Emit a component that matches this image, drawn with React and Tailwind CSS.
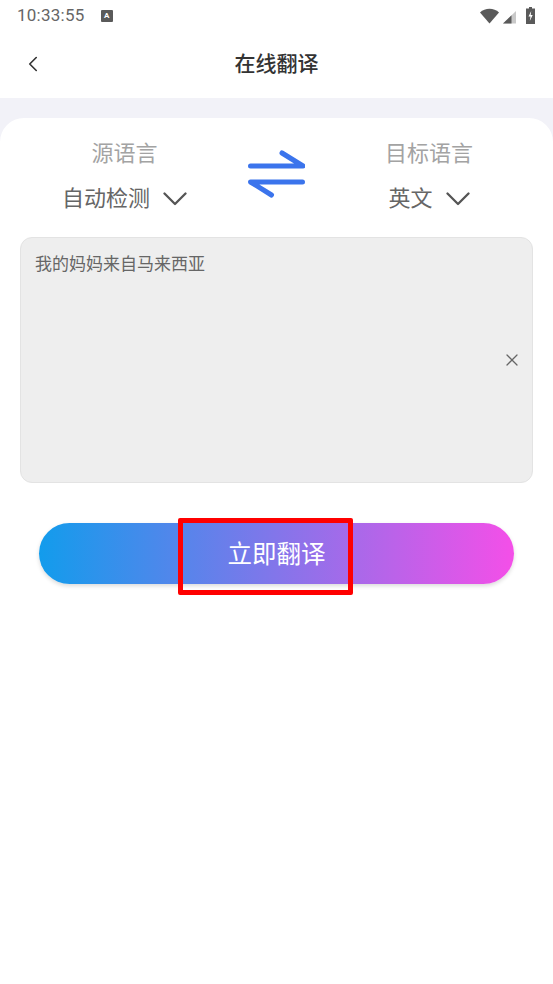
import React from "react";
import { ChevronLeft, X } from "lucide-react";

const cjk = "font-['Roboto','Noto_Sans_CJK_SC',sans-serif]";

function StatusBar() {
  return (
    <div className="h-[31px] flex items-center justify-between pl-[17px] pr-[18px] text-[#666666]">
      <div className="flex items-center gap-[16px]">
        <span className="text-[17px] leading-none tracking-[0.25px]">10:33:55</span>
        <span className="w-[12px] h-[12px] bg-[#5a5a5a] rounded-[1px] flex items-center justify-center text-white text-[8px] font-bold leading-none">A</span>
      </div>
      <div className="flex items-center gap-[10px]">
        <svg width="36" height="16" viewBox="0 0 36 16">
          <path d="M0 4.500C5-.5 14-.5 19 4.500L9.500 15.500z" fill="#5a5a5a" />
          <path d="M23 15.500L36 3v12.500z" fill="#c9c9c9" />
          <path d="M23 15.500l8.500-8.200v8.200z" fill="#5a5a5a" />
        </svg>
        <svg width="9" height="17" viewBox="0 0 9 17">
          <path d="M3 0h3v1.500h3V17H0V1.500h3z" fill="#5a5a5a" />
          <path d="M5.200 4L2.500 9.500h2l-.7 4.500L6.700 8h-2z" fill="#fff" />
        </svg>
      </div>
    </div>
  );
}

function Caret() {
  return (
    <svg width="24" height="14" viewBox="0 0 24 14">
      <path d="M1.500 1.500L12 12 22.500 1.500" fill="none" stroke="#555555" strokeWidth="2.300" strokeLinecap="round" strokeLinejoin="round" />
    </svg>
  );
}

function LangPicker({ label, value, className }) {
  return (
    <div className={`flex flex-col items-center ${className}`}>
      <div className="text-[22px] leading-[30px] text-[#a3a3a3]">{label}</div>
      <div className="mt-[15px] flex items-center gap-[13px] text-[22px] leading-[30px] text-[#666666]">
        {value}
        <Caret />
      </div>
    </div>
  );
}

export default function App() {
  return (
    <div className={`relative w-[553px] h-[984px] bg-white overflow-hidden ${cjk}`}>
      <StatusBar />

      <div className="relative h-[67px] flex items-center justify-center">
        <ChevronLeft size={26} strokeWidth={1.5} color="#333333" className="absolute left-[20px] top-[20px]" />
        <h1 className="text-[21px] font-medium text-[#333333] leading-none">在线翻译</h1>
      </div>

      <div className="bg-[#f2f2f8] pt-[20px]">
        <div className="bg-white rounded-t-[24px] h-[866px] px-[20px]">
          <div className="flex items-start justify-between pt-[21px] h-[119px]">
            <LangPicker label="源语言" value="自动检测" className="ml-[42px]" />
            <svg width="58" height="50" viewBox="0 0 58 50" className="mr-[20px] mt-[10px]">
              <path d="M3.500 17H56L35 4M55.500 33H3.500l21 13" fill="none" stroke="#3b74ec" strokeWidth="5" strokeLinecap="round" strokeLinejoin="round" />
            </svg>
            <LangPicker label="目标语言" value="英文" className="mr-[60px]" />
          </div>

          <div className="relative h-[246px] bg-[#eeeeee] border border-[#e3e3e3] rounded-[12px] px-[14px] py-[14px] text-[17px] leading-[24px] text-[#666666]">
            我的妈妈来自马来西亚
            <X size={20} strokeWidth={1.5} color="#666666" className="absolute right-[10px] top-[112px]" />
          </div>

          <button className="mt-[40px] ml-[19px] w-[475px] h-[61px] pt-[3px] rounded-full bg-[linear-gradient(90deg,#129cec,#f44fe8)] shadow-[0_2px_4px_rgba(0,0,0,0.15)] text-white text-[24.5px] leading-none">
            立即翻译
          </button>
        </div>
      </div>

      <div className="absolute left-[178px] top-[518px] w-[175px] h-[77px] border-[5px] border-[#ff0000] rounded-[2px]" />
    </div>
  );
}
